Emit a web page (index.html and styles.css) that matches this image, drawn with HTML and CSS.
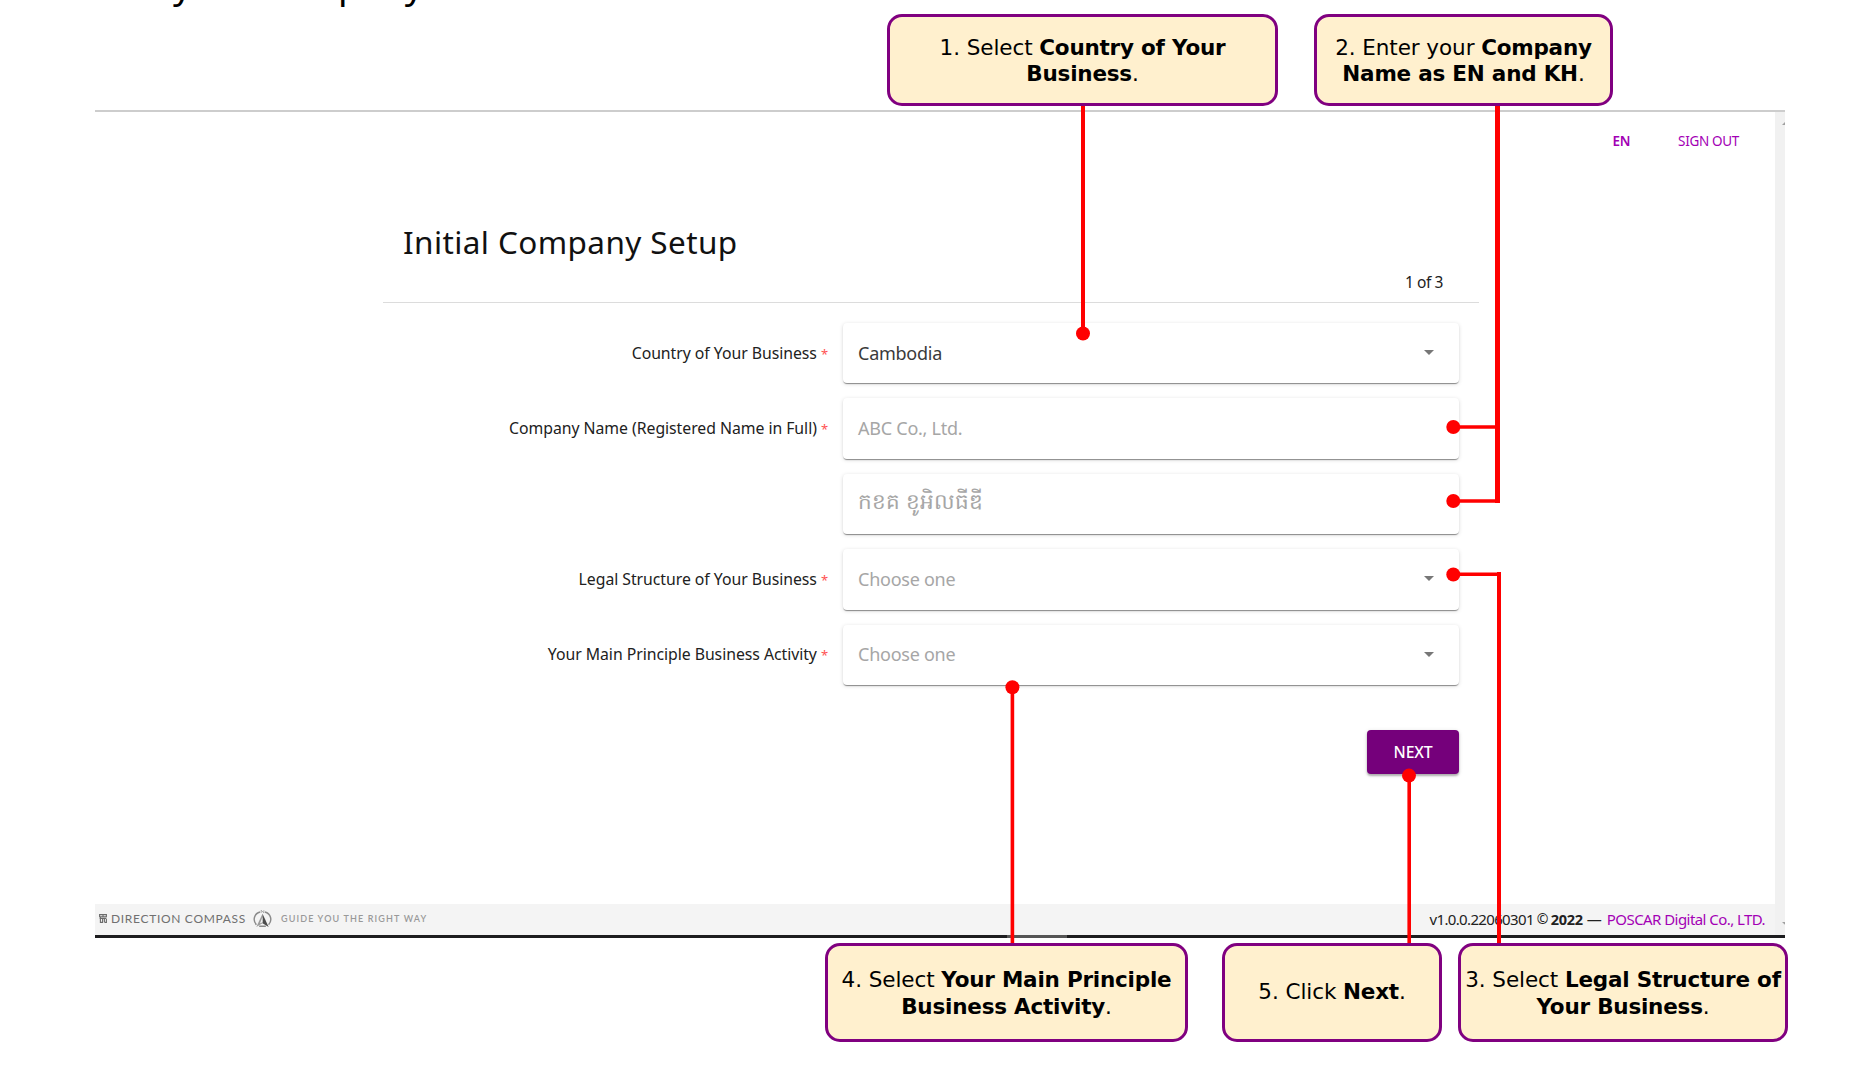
FILE: index.html
```
<!DOCTYPE html>
<html lang="en">
<head>
<meta charset="utf-8">
<title>Initial Company Setup</title>
<link rel="stylesheet" href="styles.css">
</head>
<body>
<div class="intro"><p class="intro-text">your company</p></div>

<section class="window">
  <div class="view">
    <header class="topbar">
      <a class="lang">EN</a>
      <a class="signout">SIGN OUT</a>
    </header>
    <main class="form">
      <div class="form-head">
        <h1>Initial Company Setup</h1>
        <span class="step">1 of 3</span>
      </div>
      <div class="rows">
        <label>Country of Your Business<i>*</i></label>
        <div class="field value"><span>Cambodia</span><b class="caret"></b></div>
        <label>Company Name (Registered Name in Full)<i>*</i></label>
        <div class="field"><span>ABC Co., Ltd.</span></div>
        <label></label>
        <div class="field khmer"><span>កខគ ខូអិលធីឌី</span></div>
        <label>Legal Structure of Your Business<i>*</i></label>
        <div class="field"><span>Choose one</span><b class="caret"></b></div>
        <label>Your Main Principle Business Activity<i>*</i></label>
        <div class="field"><span>Choose one</span><b class="caret"></b></div>
      </div>
      <button class="next">NEXT</button>
    </main>
    <footer class="footer">
      <svg class="mark" viewBox="0 0 8 9"><path d="M.6.6h6.8v2.2H.6zM.6 4.4h6.8M1.4 3v5.4h2.2V5M5.4 8.4h2V5M5.4 4v4M4 .6v2" fill="none" stroke="#6b6b6b" stroke-width="1.1"/></svg>
      <span class="brand">DIRECTION COMPASS</span>
      <svg class="compass" viewBox="0 0 20 20">
        <path d="M7.4 2.6A8 8 0 0 0 3.6 16M12.6 2.6A8 8 0 0 1 16.4 16M6.5 17.6h7" fill="none" stroke="#8a8a8a" stroke-width="1.5"/>
        <path d="M8.6 3.6V.8l2.8 2.8V.8" fill="none" stroke="#9a9a9a" stroke-width=".9"/>
        <path d="M10 4.5 3.5 18.5 10 14.5Z" fill="#9b9b9b"/>
        <path d="M10 4.5 16.5 18.5 10 14.5Z" fill="#4c4c4c"/>
        <path d="M10 8 7.3 14.7 10 13.4Z" fill="#f4f4f4"/>
      </svg>
      <span class="slogan">GUIDE YOU THE RIGHT WAY</span>
      <span class="version">v1.0.0.22060301</span>
      <span class="copy">©</span>
      <strong class="year">2022</strong>
      <span class="dash">—</span>
      <a class="company">POSCAR Digital Co., LTD.</a>
    </footer>
  </div>
  <div class="scrollbar">
    <svg viewBox="0 0 4 4"><path d="M0 4 4 0V4Z" fill="#a0a0a0"/></svg>
    <svg viewBox="0 0 4 4"><path d="M0 0H4V3.5Z" fill="#a0a0a0"/></svg>
  </div>
  <div class="taskbar"><span></span></div>
</section>

<svg class="lines" viewBox="0 0 1850 1090">
  <g fill="none" stroke="#f00" stroke-width="4">
    <path d="M1083 105V333"/>
    <path d="M1497.5 105V503" stroke-width="5"/>
    <path d="M1453 427H1497M1453 501H1497" stroke-width="3.6"/>
    <path d="M1453 574.3H1497" stroke-width="3.4"/>
    <path d="M1499 572V944"/>
    <path d="M1012.4 687V944M1409.2 776V944" stroke-width="3.6"/>
  </g>
  <g fill="#f00">
    <circle cx="1083" cy="333.5" r="7"/>
    <circle cx="1453.3" cy="427" r="7"/>
    <circle cx="1453.3" cy="501" r="7"/>
    <circle cx="1453.3" cy="574.5" r="7"/>
    <circle cx="1012.4" cy="687.3" r="7"/>
    <circle cx="1409" cy="775.6" r="7"/>
  </g>
</svg>

<div class="callout c1"><p>1. Select <b>Country of Your<br>Business</b>.</p></div>
<div class="callout c2"><p>2. Enter your <b>Company<br>Name as EN and KH</b>.</p></div>
<div class="callout c3"><p>3. Select <b>Legal Structure of<br>Your Business</b>.</p></div>
<div class="callout c4"><p>4. Select <b>Your Main Principle<br>Business Activity</b>.</p></div>
<div class="callout c5"><p>5. Click <b>Next</b>.</p></div>
</body>
</html>
```
FILE: styles.css
```
* { box-sizing: border-box; }
body {
  margin: 0;
  width: 1850px;
  height: 1090px;
  overflow: hidden;
  position: relative;
  background: #fff;
  color: #212121;
  font-family: "Noto Sans", sans-serif;
}
p, h1 { margin: 0; }

.intro { height: 110px; padding-left: 173px; overflow: hidden; }
.intro-text {
  margin-top: -38px;
  font: 37px/44px "Noto Sans", sans-serif;
  letter-spacing: .15px;
  color: #000;
}

.window {
  display: grid;
  grid-template-columns: 1fr 10px;
  grid-template-rows: 823px 3px;
  width: 1690px;
  margin-left: 95px;
  border-top: 2px solid #cdcdcd;
}
.view { display: flex; flex-direction: column; }
.topbar {
  display: flex;
  justify-content: flex-end;
  align-items: center;
  gap: 48px;
  height: 57px;
  padding-right: 36px;
  font-size: 13.5px;
  color: #a300b5;
}
.lang { font-weight: 600; letter-spacing: -.4px; }
.signout { letter-spacing: -.32px; }

.form { width: 1096px; margin-left: 288px; flex: 1; }
.form-head {
  display: flex;
  flex-direction: column;
  height: 134px;
  padding: 53px 36px 0 20px;
  border-bottom: 1px solid #dcdcdc;
}
h1 { font-size: 31.5px; line-height: 40px; font-weight: 400; letter-spacing: .4px; color: #111; }
.step { align-self: flex-end; margin-top: 10px; font-size: 15.5px; line-height: 20px; letter-spacing: -.4px; }

.rows {
  display: grid;
  grid-template-columns: 445px 615px;
  column-gap: 16px;
  row-gap: 15px;
  grid-auto-rows: 60.4px;
  align-items: center;
  padding-top: 20px;
}
label { padding-bottom: 1px; text-align: right; font-size: 15.8px; letter-spacing: -.04px; white-space: nowrap; }
label i { margin-left: 4px; font-style: normal; font-size: 13px; color: #ff5252; }
.field {
  display: flex;
  align-items: center;
  justify-content: space-between;
  height: 100%;
  margin-left: -1px;
  padding: 0 25px 1px 15px;
  border-radius: 4px;
  background: #fff;
  box-shadow: 0 2px 1px -1px rgba(0,0,0,.28), 0 1px 1px rgba(0,0,0,.18), 0 1px 4px rgba(0,0,0,.14);
  color: #a6a6a6;
  font-size: 18px;
  letter-spacing: -.25px;
}
.field.value { color: #3a3a3a; }
.field.khmer { font-size: 21.6px; letter-spacing: 0; }
.caret {
  border: 5px solid transparent;
  border-top-color: #777;
  border-bottom: 0;
}
.next {
  display: block;
  width: 92px;
  height: 44px;
  margin: 45px 20px 0 auto;
  padding: 0;
  border: 0;
  border-radius: 4px;
  background: #75007b;
  box-shadow: 0 2px 2px rgba(0,0,0,.25), 0 1px 4px rgba(0,0,0,.15);
  color: #fff;
  font: 500 15.8px "Noto Sans", sans-serif;
  letter-spacing: -.2px;
}

.footer {
  display: flex;
  align-items: center;
  height: 31px;
  padding: 0 10px 2px 4px;
  background: #f4f4f4;
  font-size: 15px;
  white-space: nowrap;
}
.mark { width: 8px; height: 9px; }
.brand { width: 142px; margin-left: 4px; font: 12px Lato, sans-serif; letter-spacing: .68px; color: #707070; }
.compass { width: 19px; height: 20px; }
.slogan { margin-left: 9px; font: 600 9px Lato, sans-serif; letter-spacing: 1.15px; color: #999; }
.version { margin-left: auto; letter-spacing: -.65px; }
.copy { width: 14px; margin-left: 3px; font-size: 14px; }
.year { font-size: 14.5px; letter-spacing: -.3px; }
.dash { width: 17px; margin: 0 3px 0 4px; letter-spacing: -1px; }
.company { color: #a300b5; letter-spacing: -.56px; }

.scrollbar {
  display: flex;
  flex-direction: column;
  justify-content: space-between;
  align-items: flex-end;
  padding: 10px 0 10px;
  background: #f1f1f1;
}
.scrollbar svg { width: 3px; height: 3px; }
.taskbar { grid-column: 1 / 3; padding-left: 912px; background: #1d1d1f; }
.taskbar span { display: block; width: 60px; height: 3px; background: #555; }

.lines { position: absolute; left: 0; top: 0; width: 1850px; height: 1090px; }

.callout {
  position: absolute;
  display: flex;
  align-items: center;
  justify-content: center;
  padding-top: 2px;
  border: 3.5px solid #800080;
  border-radius: 15px;
  background: #fff0ce;
  color: #000;
  font: 21.5px/26px "DejaVu Sans", sans-serif;
  letter-spacing: -.08px;
  text-align: center;
  white-space: nowrap;
}
.callout b { letter-spacing: -.22px; }
.c1, .c2 { top: 14px; height: 92px; }
.c3, .c4, .c5 { top: 943px; height: 99px; line-height: 26.7px; }
.c5 { padding-top: 0; }
.c1 { left: 887px; width: 391px; }
.c2 { left: 1314px; width: 299px; }
.c3 { left: 1458px; width: 330px; }
.c4 { left: 825px; width: 363px; }
.c5 { left: 1222px; width: 220px; }
```
